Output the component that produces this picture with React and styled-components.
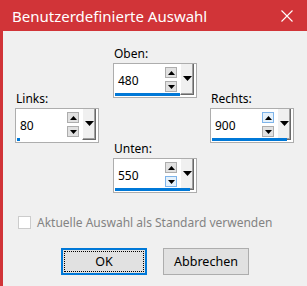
import React from 'react'
import styled, { createGlobalStyle, css } from 'styled-components'

const GlobalStyle = createGlobalStyle`
  html, body {
    margin: 0;
    padding: 0;
    background: #f0f0f0;
  }
  body {
    font-family: 'Noto Sans', 'Open Sans', sans-serif;
    font-size: 12px;
    color: #000;
  }
`

const accent = '#0078d7'

export const Window = styled.div`
  width: 307px;
  height: 286px;
  display: flex;
  flex-direction: column;
  box-sizing: border-box;
  border-left: 3px solid #d13438;
  background: #f0f0f0;
  overflow: hidden;
`

export const TitleBar = styled.header`
  height: 31px;
  margin-left: -3px;
  display: flex;
  align-items: center;
  justify-content: space-between;
  padding: 0 14px 0 12px;
  background: #d13438;
  color: #fff;
  font-size: 15px;
`

const CloseIcon = () => (
  <svg width="12" height="12" viewBox="0 0 12 12">
    <path d="M0.5 0.5 L11.5 11.5 M11.5 0.5 L0.5 11.5" stroke="#fff" strokeWidth="1.1" />
  </svg>
)

export const Body = styled.div`
  display: flex;
  flex-direction: column;
  padding: 0 0 0 12px;
`

export const Fields = styled.div`
  display: grid;
  grid-template-columns: 98px 97px 84px;
  padding-top: 13px;
`

export const Column = styled.div`
  display: flex;
  flex-direction: column;
  gap: ${(p) => p.$gap || 0}px;
  padding-top: ${(p) => p.$top || 0}px;
`

export const Group = styled.div`
  display: flex;
  flex-direction: column;
`

export const Label = styled.label`
  height: 19px;
  line-height: 19px;
  padding-left: 1px;
`

export const SpinBox = styled.div`
  width: 84px;
  height: 35px;
  box-sizing: border-box;
  border: 1px solid #adadad;
  background: #fff;
  display: flex;
  align-items: flex-start;
  position: relative;
`

export const Value = styled.span`
  flex: 1;
  padding: 9px 0 0 4px;
  line-height: 16px;
`

export const Arrows = styled.div`
  display: flex;
  flex-direction: column;
  gap: 3px;
  padding-top: 3px;
  margin-right: 3px;
`

export const Arrow = styled.span`
  width: 12px;
  height: 11px;
  box-sizing: border-box;
  border: 1px solid #adadad;
  background: #e1e1e1;
  display: flex;
  align-items: center;
  justify-content: center;

  ${(p) =>
    p.$hover &&
    css`
      border-color: #7eb4ea;
      background: #e5f1fb;
    `}
`

const Triangle = ({ up }) => (
  <svg width="7" height="4" viewBox="0 0 7 4">
    <path d={up ? 'M0 4 L3.5 0 L7 4 Z' : 'M0 0 L7 0 L3.5 4 Z'} fill="#000" />
  </svg>
)

export const DropButton = styled.span`
  width: 14px;
  height: 31px;
  box-sizing: border-box;
  margin-right: 2px;
  border-right: 1px solid #696969;
  border-bottom: 1px solid #696969;
  border-left: 1px solid #fff;
  box-shadow: inset -1px -1px 0 #a0a0a0;
  background: #f0f0f0;
  display: flex;
  align-items: center;
  justify-content: center;
  padding-bottom: 2px;
`

const DropTriangle = () => (
  <svg width="9" height="5" viewBox="0 0 9 5">
    <path d="M0 0 L9 0 L4.5 5 Z" fill="#000" />
  </svg>
)

export const Fill = styled.span`
  position: absolute;
  left: 1px;
  bottom: 1px;
  height: 3px;
  background: ${accent};
`

export const CheckRow = styled.div`
  display: flex;
  align-items: center;
  gap: 6px;
  margin-top: 21px;
  padding-left: 3px;
  color: #838383;
  font-size: 12px;
`

export const CheckBox = styled.span`
  width: 13px;
  height: 13px;
  box-sizing: border-box;
  border: 1px solid #cccccc;
  background: #fff;
`

export const Buttons = styled.div`
  display: flex;
  justify-content: center;
  gap: 16px;
  margin-top: 17px;
  padding-right: 12px;
`

export const Button = styled.button`
  width: 86px;
  height: 27px;
  box-sizing: border-box;
  font: inherit;
  font-size: 12.5px;
  color: #000;
  background: #e1e1e1;
  border: 1px solid #adadad;
  padding: 0;
  position: relative;

  ${(p) =>
    p.$default &&
    css`
      border: 2px solid ${accent};
      &::after {
        content: '';
        position: absolute;
        inset: 1px;
        border: 1px dotted #000;
      }
    `}
`

const Spin = ({ label, value, fill, hover }) => (
  <Group>
    <Label>{label}</Label>
    <SpinBox>
      <Value>{value}</Value>
      <Arrows>
        <Arrow $hover={hover === 'up'}>
          <Triangle up />
        </Arrow>
        <Arrow $hover={hover === 'down'}>
          <Triangle />
        </Arrow>
      </Arrows>
      <DropButton>
        <DropTriangle />
      </DropButton>
      <Fill style={{ width: fill }} />
    </SpinBox>
  </Group>
)

export default function App() {
  return (
    <>
      <GlobalStyle />
      <Window>
        <TitleBar>
          <span>Benutzerdefinierte Auswahl</span>
          <CloseIcon />
        </TitleBar>
        <Body>
          <Fields>
            <Column $top={45}>
              <Spin label="Links:" value="80" fill={3} />
            </Column>
            <Column $gap={41}>
              <Spin label="Oben:" value="480" fill={65} />
              <Spin label="Unten:" value="550" fill={75} hover="down" />
            </Column>
            <Column $top={45}>
              <Spin label="Rechts:" value="900" fill={75} hover="up" />
            </Column>
          </Fields>
          <CheckRow>
            <CheckBox />
            <span>Aktuelle Auswahl als Standard verwenden</span>
          </CheckRow>
          <Buttons>
            <Button $default>OK</Button>
            <Button>Abbrechen</Button>
          </Buttons>
        </Body>
      </Window>
    </>
  )
}
